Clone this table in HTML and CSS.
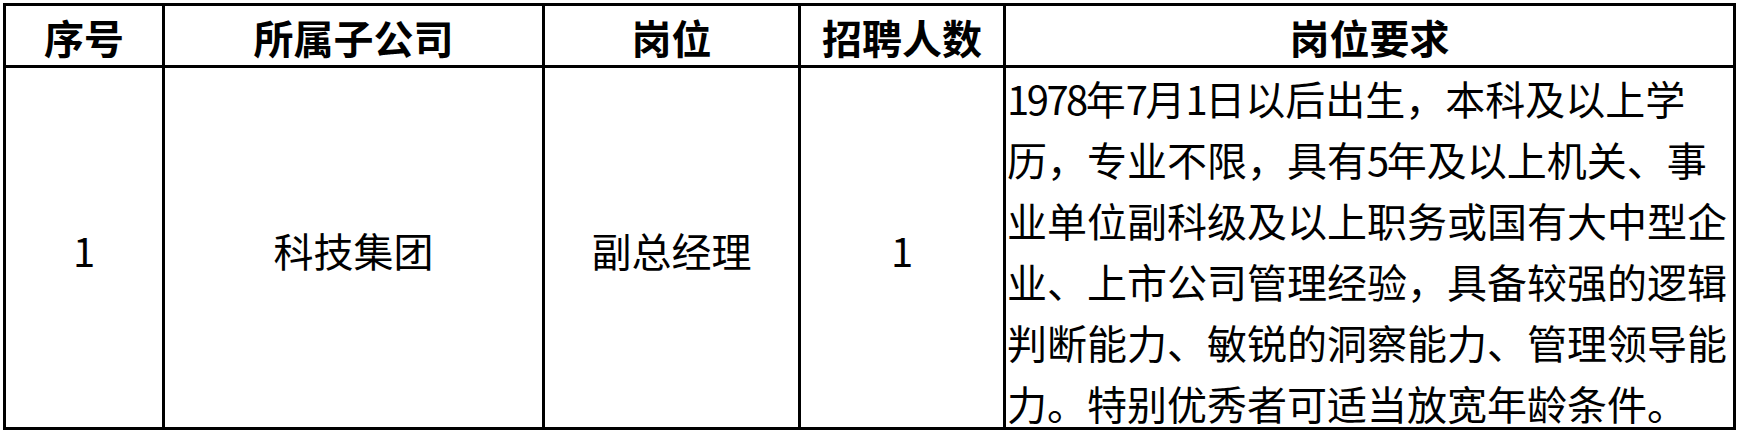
FILE: index.html
```html
<!DOCTYPE html>
<html lang="zh-CN">
<head>
<meta charset="utf-8">
<title>岗位招聘</title>
<link rel="stylesheet" href="styles.css">
</head>
<body>
<div class="sheet">
  <div class="cell head">序号</div>
  <div class="cell head">所属子公司</div>
  <div class="cell head">岗位</div>
  <div class="cell head">招聘人数</div>
  <div class="cell head">岗位要求</div>
  <div class="cell body">1</div>
  <div class="cell body">科技集团</div>
  <div class="cell body">副总经理</div>
  <div class="cell body">1</div>
  <div class="cell req"><span class="num">1978</span>年<span class="num">7</span>月<span class="num">1</span>日以后出生，本科及以上学<br>历，专业不限，具有<span class="num">5</span>年及以上机关、事<br>业单位副科级及以上职务或国有大中型企<br>业、上市公司管理经验，具备较强的逻辑<br>判断能力、敏锐的洞察能力、管理领导能<br>力。特别优秀者可适当放宽年龄条件。</div>
</div>
</body>
</html>
```
FILE: styles.css
```css
html, body {
  margin: 0;
  padding: 0;
  background: #ffffff;
}

body {
  font-family: "Noto Sans CJK SC", "Noto Sans", sans-serif;
  color: #000000;
}

.sheet {
  margin: 3px 0 0 3px;
  display: grid;
  grid-template-columns: 156px 377px 253px 202px 727px;
  grid-template-rows: 59px 359px;
  gap: 3px;
  padding: 3px;
  background: #000000;
  width: max-content;
}

.cell {
  background: #ffffff;
  display: flex;
  align-items: center;
  justify-content: center;
  font-size: 40px;
  line-height: 48px;
  box-sizing: border-box;
}

.head {
  font-weight: 700;
  padding-top: 2px;
}

.body {
  padding-top: 4px;
}

.req {
  display: block;
  padding: 0 0 0 1px;
  line-height: 61px;
  white-space: nowrap;
  text-align: left;
}

.num {
  letter-spacing: -2.5px;
}
```
